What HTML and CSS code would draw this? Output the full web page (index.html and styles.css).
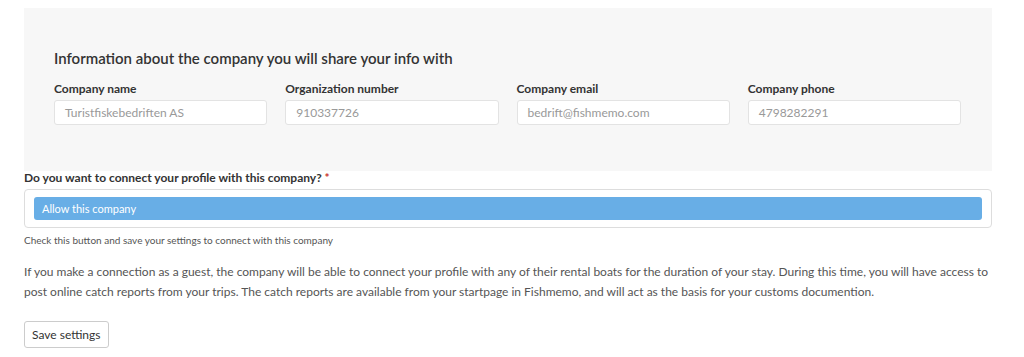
FILE: index.html
```html
<!DOCTYPE html>
<html>
<head>
<meta charset="utf-8">
<link rel="stylesheet" href="styles.css">
</head>
<body>
<div class="page">
  <section class="panel">
    <h2 class="panel-title">Information about the company you will share your info with</h2>
    <div class="fields">
      <div class="field">
        <label class="field-label">Company name</label>
        <div class="input">Turistfiskebedriften AS</div>
      </div>
      <div class="field">
        <label class="field-label">Organization number</label>
        <div class="input">910337726</div>
      </div>
      <div class="field">
        <label class="field-label">Company email</label>
        <div class="input">bedrift@fishmemo.com</div>
      </div>
      <div class="field">
        <label class="field-label">Company phone</label>
        <div class="input">4798282291</div>
      </div>
    </div>
  </section>
  <div class="question">Do you want to connect your profile with this company? <span class="req">*</span></div>
  <div class="toggle-box">
    <div class="toggle-on">Allow this company</div>
  </div>
  <div class="help">Check this button and save your settings to connect with this company</div>
  <p class="info">If you make a connection as a guest, the company will be able to connect your profile with any of their rental boats for the duration of your stay. During this time, you will have access to post online catch reports from your trips. The catch reports are available from your startpage in Fishmemo, and will act as the basis for your customs documention.</p>
  <button class="btn">Save settings</button>
</div>
</body>
</html>
```
FILE: styles.css
```css
html, body {
  margin: 0;
  padding: 0;
  background: #fff;
}
body {
  font-family: Lato, "DejaVu Sans", sans-serif;
  color: #333;
}
.page {
  padding: 8px 32px 0 24px;
}
.panel {
  background: #f7f7f7;
  padding: 41px 31px 46px 30px;
}
.panel-title {
  margin: 0 0 14px;
  font-size: 15px;
  font-weight: 600;
  line-height: 18px;
  color: #333;
}
.fields {
  display: grid;
  grid-template-columns: repeat(4, 1fr);
  column-gap: 18px;
}
.field-label {
  display: block;
  font-size: 12px;
  font-weight: 700;
  line-height: 16px;
  margin-bottom: 3px;
  color: #333;
}
.input {
  height: 25px;
  box-sizing: border-box;
  background: #fff;
  border: 1px solid #e3e3e3;
  border-radius: 3px;
  padding: 0 10px;
  font-size: 12px;
  line-height: 23px;
  color: #999;
}
.question {
  margin-top: 0;
  font-size: 12px;
  font-weight: 700;
  line-height: 14px;
  color: #333;
}
.req {
  color: #c9302c;
}
.toggle-box {
  margin-top: 4px;
  border: 1px solid #ddd;
  border-radius: 4px;
  padding: 7px 9px;
}
.toggle-on {
  background: #68aee6;
  color: #fff;
  border-radius: 3px;
  height: 23px;
  line-height: 23px;
  padding-left: 8px;
  font-size: 11px;
}
.help {
  margin-top: 5px;
  font-size: 10px;
  line-height: 14px;
  color: #555;
}
.info {
  margin: 15px 0 0;
  font-size: 12px;
  line-height: 20px;
  color: #555;
}
.btn {
  margin-top: 19px;
  font-family: inherit;
  font-size: 12px;
  color: #333;
  background: #fff;
  border: 1px solid #ccc;
  border-radius: 3px;
  height: 27px;
  padding: 0 7px;
}
```
